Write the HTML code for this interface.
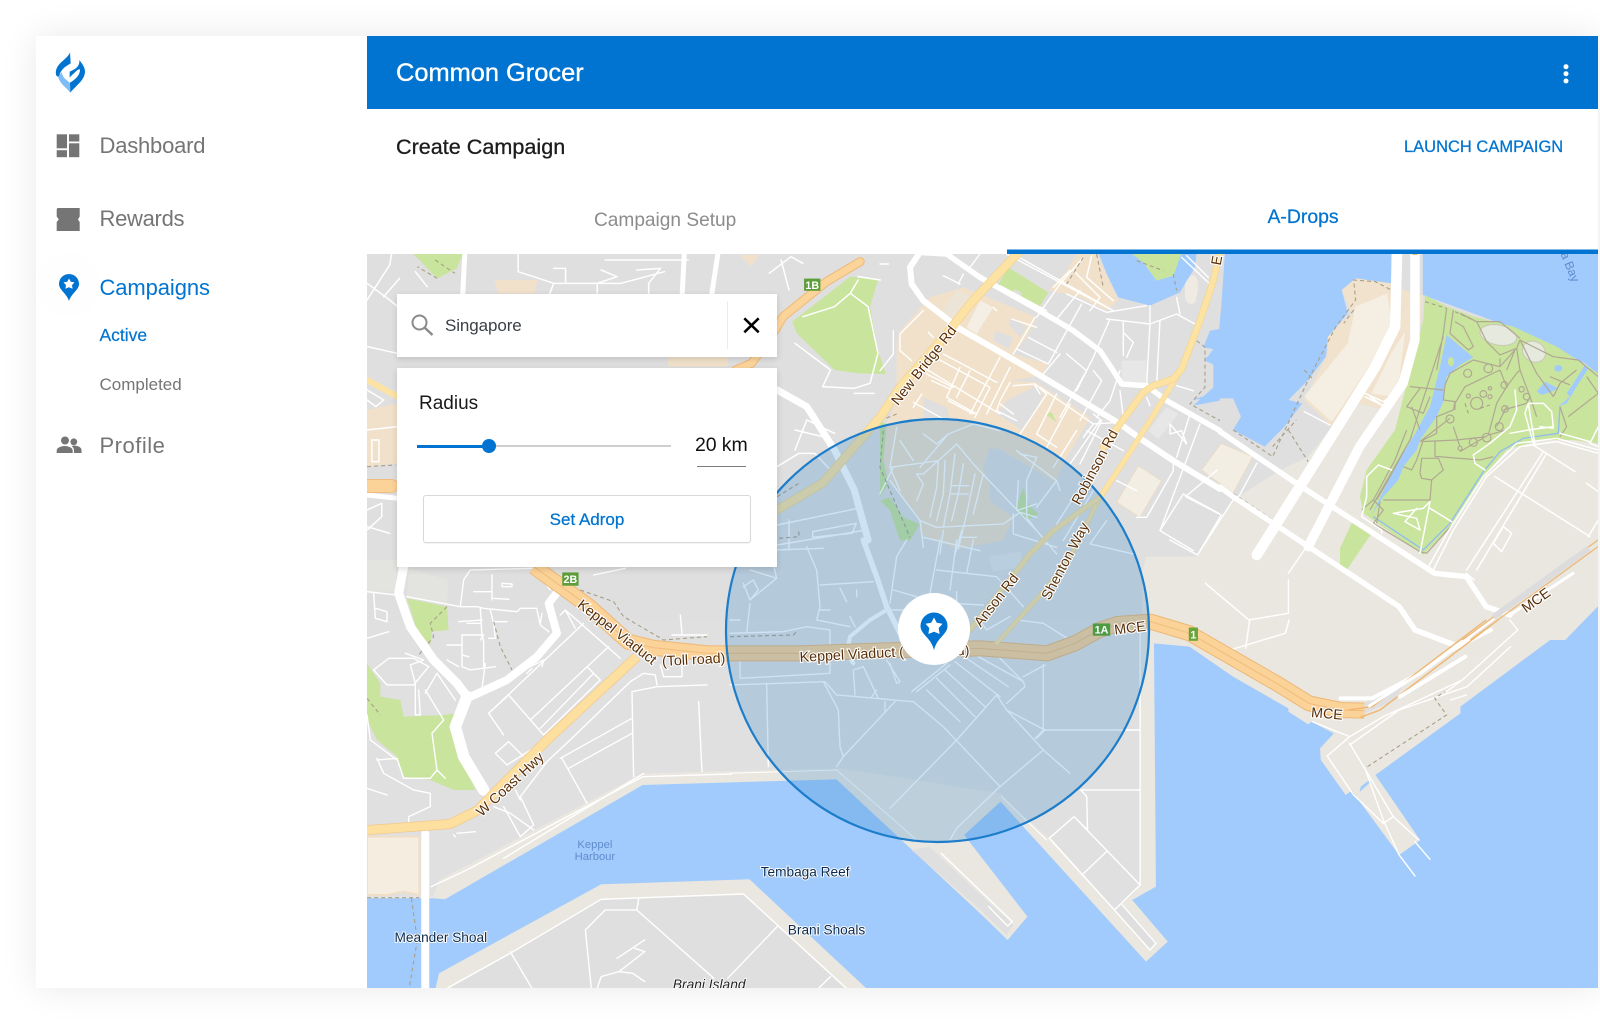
<!DOCTYPE html>
<html lang="en">
<head>
<meta charset="utf-8">
<title>Common Grocer - Create Campaign</title>
<style>
html,body{margin:0;padding:0;background:#fff;width:1600px;height:1025px;overflow:hidden;font-family:"Liberation Sans",sans-serif}
#card{position:absolute;left:36px;top:36px;width:1562px;height:952px;background:#fff;box-shadow:0 0 34px rgba(0,0,0,.09)}
svg#m{position:absolute;left:0;top:0}
svg#m *{vector-effect:non-scaling-stroke}
.t{position:absolute;white-space:nowrap;line-height:1}
.r{fill:none;stroke:#fff;stroke-linecap:round;stroke-linejoin:round}
.d{fill:none;stroke:#a89f88;stroke-width:1.1;stroke-dasharray:4 3}
.g{fill:none;stroke:#b0a893;stroke-width:1.2;stroke-linejoin:round}
.lb{font:14px "Liberation Sans",sans-serif;fill:#5a2f08;stroke:#fff;stroke-width:2.2;paint-order:stroke;text-anchor:middle}
.wl{font:13.4px "Liberation Sans",sans-serif;fill:#0d2a4a;stroke:#fff;stroke-width:1.8;paint-order:stroke;text-anchor:middle}
.sh{font:bold 10.5px "Liberation Sans",sans-serif;fill:#fff;text-anchor:middle}
.panel{position:absolute;background:#fff;box-shadow:0 2px 6px rgba(0,0,0,.14)}
</style>
</head>
<body>
<div id="card"></div>

<svg id="m" width="1600" height="1025" viewBox="0 0 1600 1025" xmlns="http://www.w3.org/2000/svg">
<defs>
<clipPath id="c"><rect x="367" y="254" width="1231" height="734"/></clipPath>
<path id="hwA" d="M440,-160L580,-40 678,65 740,83 880,100 1115,100 1358,90 1568,85 1738,100 1808,70 1870,30 1915,12 2000,5 2098,40 2208,115 2318,190 2400,250 2480,270 2540,272"/>
<path id="hwB" d="M0,632L228,612 296,572 473,360 700,110"/>
<path id="hwC" d="M420,-10L270,150 200,240 60,400 0,490 -172,687 -309,768"/>
<path id="hwD" d="M1265,35L1180,95 1070,200 1040,260 990,340 950,360"/>
<path id="hwE" d="M1020,-10L1000,80 960,200 905,345 880,375 820,395 790,415 720,510 670,580"/>
<path id="hwF" d="M905,345L880,385 810,500 740,610 660,730 520,830 450,900 270,1128"/>
<path id="hwG" d="M660,730L570,909 495,1008 351,1167"/>
</defs>
<g clip-path="url(#c)"><g style="filter:blur(.35px)">
<rect x="367" y="254" width="1231" height="734" fill="#a2cbfd"/>

<!-- ========== LAND FILLS ========== -->
<rect x="367" y="254" width="613" height="380" fill="#dfdfdf"/>
<g transform="translate(980,240) scale(.3954,.3333)">
<path fill="#dfdfdf" d="M0,30L620,30 610,200 600,330 570,355 590,375 590,460 535,480 575,475 640,475 660,530 640,570 720,620 770,560 815,490 780,480 830,420 875,350 880,290 930,220 915,150 950,115 1040,130 1040,30 1120,30 1120,165 1270,230 1400,290 1530,370 1570,410 1570,1090 1480,1200 0,1200Z"/>
<path fill="#e9e7df" d="M410,1000L420,950 550,950 640,780 760,690 830,650 890,560 950,490 1040,500 1100,400 1570,400 1570,1090 1480,1200 410,1200Z"/>
<path fill="#f0e2cc" d="M820,480L880,340 880,290 940,220 915,150 950,115 1040,130 1090,160 1120,165 1115,250 1095,330 1060,480 1030,510 950,490 890,560Z"/>
<path fill="#f5efe3" d="M820,470L930,310 950,200 1030,160 1040,250 1000,350 890,545ZM990,460L1040,340 1075,275 1060,420 1040,470Z"/>
<path fill="#f3eee4" stroke="#eadcc5" stroke-width="1" d="M560,690L610,610 690,650 640,760Z"/>
</g>
<!-- north-left fills -->
<g transform="translate(360,250) scale(.3954,.3333)">
<path fill="#c9e49d" d="M135,12L260,12 245,55 195,85ZM1093,215L1240,80 1310,90 1290,170 1310,300 1330,372 1260,370 1200,360 1105,250Z"/>
<path fill="#f1e1ca" d="M18,480L95,460 95,640 18,650ZM340,90L450,90 440,130 350,130ZM780,320L930,320 930,350 780,350ZM960,15L1010,15 990,50Z"/>
</g>
<!-- south fills -->
<g transform="translate(360,620) scale(.3954,.3333)">
<path fill="#e9e7df" d="M0,0L3078,0 2783,260 2783,280 2568,465 2681,660 2628,705 2508,512 2493,525 2430,420 2428,385 2463,340 2406,305 2398,313 2348,275 2348,265 2208,170 2098,80 2008,70 2013,800 1953,840 2043,965 1988,1025 1620,545 1528,645 1688,890 1638,960 1568,880 1205,478 715,495 215,838 185,835 0,835Z"/>
<path fill="#e0e0e0" d="M0,0L1973,0 1973,795 1953,825 1908,870 1748,660 1660,570 1620,520 1215,445 715,460 200,780 185,830 0,830Z"/>
<path fill="#dfdfdf" d="M1440,680L1652,915 1635,945 1560,860 1395,690Z"/>
<path fill="#dfdfdf" d="M1908,870L1928,855 2013,965 1998,990Z"/>
<path fill="#a2cbfd" d="M2543,500l14,-15 -6,-3 -20,18 -3,16Z"/>
<path fill="#f5eee0" stroke="#f0dfc6" stroke-width="2" d="M18,650L150,650 150,825 110,815 70,825 18,825Z"/>
<path fill="#e9e7df" d="M190,1110L200,1060 610,793 985,778 1285,1110Z"/>
<path fill="#dfdfdf" d="M220,1110L610,840 970,825 1230,1110Z"/>
<path fill="#dfdfdf" d="M2520,260L2590,220 2640,190 2620,240 2540,280Z"/>
</g>
<!-- A: central north fills -->
<g transform="translate(880,254) scale(.3333)">
<path fill="#a2cbfd" d="M655,-5L680,60 715,130 810,155 900,115 945,40 950,-5 905,-5 880,65 830,80 790,25 750,-5Z"/>
<path fill="#c9e49d" d="M750,-5L790,25 830,80 880,65 905,-5Z"/>
<path fill="#a2cbfd" d="M990,230L1020,225 1020,440 940,455 1000,400 1020,340 975,320 1000,285 970,280Z"/>
<path fill="#f0ebe2" d="M915,90Q935,50 950,70Q960,100 945,145Q925,160 915,130Z"/>
<path fill="#f1e1ca" d="M50,270L60,230 150,130 250,100 470,190 440,250 400,300 505,330 485,365 395,380 470,385 630,490 560,610 525,685 420,620 350,580 310,640 330,700 330,740 400,790 370,860 230,885 130,845 120,800 30,680 0,580 20,510 50,440Z"/>
<path fill="#f1e1ca" d="M505,110L560,50 590,0 650,0 680,60 715,140 680,170 600,130 560,120Z"/>
<path fill="#dfdfdf" d="M380,440L470,395 490,425 430,530 350,480ZM395,190L440,220 420,250 385,210ZM130,430L200,460 210,500 130,490ZM345,230L400,250 385,285 340,260ZM330,580L410,620 330,700 310,640Z"/>
<path fill="#c9e49d" d="M355,90L385,40 505,115 475,165 430,130 395,120Z"/>
<path fill="#dfdfdf" d="M400,105l25,10-5,20-22,-8Z"/>
<path fill="#c9e49d" d="M405,770L430,700 445,750 475,780 440,800ZM0,740L30,730 70,790 120,810 90,860 60,860 30,770ZM20,510L10,620 25,690 0,730 0,500ZM495,480l20,-5 15,30-20,-15Z"/>
<path fill="#ece4d6" d="M185,175L230,105 270,130 220,195Z"/>
<path fill="#f4eee4" d="M260,220L300,140 340,160 290,240Z"/>
<path fill="#f3eee4" stroke="#eadcc5" stroke-width="1" d="M710,745L775,635 845,680 780,790Z"/>
<path fill="#e7e7e7" d="M725,320L800,320 800,385 725,385ZM805,530L860,460 895,480 835,555Z"/>
</g>
<!-- B: garden fills -->
<g transform="translate(1340,270) scale(.3333)">
<path fill="#c9e49d" d="M255,75L320,110 400,140 520,170 650,230 775,310 775,520 700,510 600,510 500,540 430,620 340,760 250,855 70,730 60,680 80,600 165,480 250,150ZM0,835L42,745 95,790 20,900 0,900Z"/>
<path fill="#a2cbfd" d="M320,195L400,262 360,285 320,320 310,395 290,440 240,510 230,540 190,590 175,630 130,680 95,735 165,590 220,500 270,410 300,290ZM590,365L615,335 655,355 635,365 605,375ZM735,285L700,340 680,370 690,380 655,410 680,400 710,350 745,295ZM643,295a12,10 0 1,0 24,0a12,10 0 1,0 -24,0Z"/>
<ellipse cx="333" cy="275" rx="9" ry="14" fill="#c9e49d"/>
<ellipse cx="475" cy="195" rx="56" ry="30" transform="rotate(12 475 195)" fill="#e6e9dd" stroke="#c8c8b8"/>
<ellipse cx="582" cy="245" rx="36" ry="30" transform="rotate(30 582 245)" fill="#e6e9dd" stroke="#c8c8b8"/>
</g>
<!-- C: SW fills -->
<g transform="translate(367,560) scale(.3333)">
<path fill="#c9e49d" d="M120,115L240,140 245,210 195,215 190,255 150,210ZM0,310L40,370 40,410 100,420 110,470 230,465 265,460 265,520 290,600 325,690 260,690 190,660 110,650 90,590 30,540 0,480Z"/>
<path fill="#e6e6df" d="M0,0L90,0 85,95 0,95ZM125,25L245,60 240,130 120,110Z" opacity=".55"/>
</g>
<!-- D: building -->
<g transform="translate(730,540) scale(.3333)">
<path fill="#e6e6e6" d="M775,50L870,35 880,80 790,95Z"/>
</g>

<!-- ========== THIN ROADS ========== -->
<g transform="translate(360,250) scale(.3954,.3333)" class="r" stroke-width="1.5">
<path d="M18,150L75,45 80,12M18,100L75,150 95,170M140,65L170,110M100,85L60,140M400,12L400,65 490,100 660,100 770,65M490,55L520,55 520,100M610,60L650,80 600,100 600,130M700,60L760,55 730,100 730,130M620,30L830,30M490,100L480,130M1035,70L1090,20 1120,40M1065,30L1085,120"/>
<path d="M1100,280L1190,360 1170,410 1250,415 1290,400 1310,310 1285,170 1240,130 1200,170 1120,200M1240,130L1260,90M1260,80L1316,90M1055,650L1110,610 1150,610 1190,660M1100,540L1170,560M1100,600L1130,510 1200,550M1250,430L1300,430"/>
<path d="M18,290L94,310M18,420L60,450 40,470 18,450M18,540L94,530M30,570L48,570 48,635 30,635ZM18,780L55,760 55,800 18,840M18,830L75,850"/>
<path d="M1055,825L1260,775M1085,810L1085,900M1145,845L1255,820 1245,850 1145,862ZM1055,885L1280,840"/>
</g>
<g transform="translate(360,250) scale(.3954,.3333)">
<path class="d" d="M195,85L145,50M190,30L240,70M18,650L90,645M1055,740L1110,700M1060,865L1110,860 1110,840"/>
</g>

<!-- A thin -->
<g transform="translate(880,254) scale(.3333)" class="r" stroke-width="1.4">
<path d="M60,270L60,240 130,170M60,270L60,290 95,320M145,235L160,250M40,230L40,300 0,350M190,65L240,90M250,60L235,90M300,0L270,40M340,160L350,170M0,30L25,30"/>
<path d="M130,340L360,480M165,310L330,400M190,300L350,385M140,360L220,400M155,380L210,405M240,340L200,430 290,480M270,350L230,430M205,440L280,480M330,400L285,490M360,310L270,480M390,340L320,480M100,445L190,495M125,420L100,460M390,385L360,440 350,470 410,500M400,395L465,390 500,420M360,450L400,480M465,395L480,420M500,420L420,540M530,420L470,540 530,580M570,450L500,580M480,400L640,510 610,550M620,530L730,590M590,530L520,640M660,500L570,630M720,505L640,510M640,480L665,500 600,630"/>
<path d="M395,195L470,220M465,190L400,300M410,285L505,330M445,250L530,295M360,95L500,170M520,100L570,50M470,190L540,90 610,10M600,110L530,195M605,150L505,330M580,50L660,130 630,170M635,5L620,70 700,140M560,120L680,175 800,155M380,0L690,165M400,0L700,170"/>
<path d="M690,195L640,310 590,410M560,300L620,350 540,490M540,300L490,360M730,205L730,305M730,235L760,265 740,310M810,155L810,210 800,395M680,195L810,210 890,180 945,210M840,200L830,390M890,130L900,180M640,350L665,380 600,500M720,350L690,440 650,490M720,410L730,490M890,395L940,410M930,480L890,610M800,430L810,455M870,510L920,570 905,530 870,540 870,510M960,510L840,830 940,890M710,680L770,710M1020,780L910,720 840,830M710,660L740,600M880,620L880,650 800,790 770,790M905,10L990,90 1000,60M920,5L985,70"/>
<path d="M30,640L175,620M50,520L30,640 60,710M60,560L100,620M130,540L170,570 205,540 280,510 360,530M205,540L120,640M230,570L175,620 130,660 110,660 130,690 110,740M175,620L170,700 150,790M195,620L190,720 170,800M225,600L210,720 190,820M250,630L235,720 215,800M285,660L260,780 235,885M310,660L280,780M230,570L280,630 470,830 530,900M215,695L265,695M215,720L265,720M30,680L120,800 170,820 370,810 420,775 470,790M40,640L0,720M120,800L130,880M190,830L180,900M245,830L225,900M240,850L290,850M130,850L300,890M400,780L400,840 530,880M470,610L440,680 440,790 470,830M415,680L410,770 470,750M410,590L530,680 540,710M530,680L470,760M600,700L530,810M640,710L550,860M680,800L630,870 760,900M420,600L470,610"/>
</g>
<g transform="translate(880,254) scale(.3333)">
<path class="d" d="M0,500L50,480M10,530L0,640 60,780 90,850M610,10L560,90M650,0L670,100M880,60L890,110M770,20L850,50M950,260L975,280 975,400 930,450 1020,500"/>
</g>

<!-- NE thin -->
<g transform="translate(980,240) scale(.3954,.3333)" class="r" stroke-width="1.4">
<path d="M700,670L650,780M820,515L885,555M550,945L640,780M610,825L550,945 480,900M600,690L520,770 610,825"/>
<path d="M780,1000L820,930M780,1020L780,1120 680,1140 570,1030M1230,1000L1250,1020"/>
</g>
<g transform="translate(980,240) scale(.3954,.3333)">
<path class="d" d="M640,570L740,650 830,420 900,260 950,180 945,120 1000,125 1040,150M740,620L800,540M640,760L740,840M800,730L760,860M945,210L920,250M820,390L840,415M780,570L830,665"/>
</g>

<!-- B garden paths -->
<g transform="translate(1340,270) scale(.3333)">
<path d="M660,410L655,490 550,505 480,545 430,605 330,760 250,840 100,740" fill="none" stroke="#8fbdf0" stroke-width="1.3"/>
<path class="g" d="M320,115L310,190 290,300M340,120L330,190 385,240 400,230 370,170 345,155M360,130L410,155 440,215 480,255 530,235 540,210 640,260 715,270 775,320M410,155L480,155 540,205M480,265L480,290 400,270 330,310 315,345 310,390 345,395 340,420 290,440 290,490 250,510 230,570 215,600 190,590M245,565L295,565 310,600 275,630 245,625 240,610ZM275,630L270,690 130,690M120,695L110,760M245,515L350,510M285,515L285,560 295,560 420,570 460,560M330,445L240,515M345,420L345,400 375,350 480,300M480,300L500,350 470,400 445,495 360,545M340,470L360,530M350,510L440,500M480,290L525,240 500,300M530,235L540,300 570,380 560,400 490,420M540,210L590,310 640,380M640,380L660,340 710,300M500,350L530,310 540,300M445,495L500,480 510,470M470,470L500,410M570,380L590,440M630,320L690,345M685,440L775,370 740,320M660,410L680,470 660,500M210,350L310,360M240,355L200,410 250,430 270,380M215,410L240,480M200,480L165,570 100,690 65,720M215,500L150,620 110,690M310,200L210,510 90,720M100,690L130,720 100,760 240,845 260,850 340,760"/>
<g fill="none" stroke="#b0a893" stroke-width="1.2">
<circle cx="445" cy="295" r="13"/><circle cx="383" cy="310" r="12"/><circle cx="330" cy="447" r="12"/><circle cx="400" cy="517" r="12"/><circle cx="440" cy="503" r="13"/><circle cx="478" cy="470" r="12"/><circle cx="493" cy="345" r="10"/><circle cx="495" cy="417" r="10"/><circle cx="360" cy="535" r="6"/><circle cx="560" cy="380" r="10"/><circle cx="545" cy="358" r="8"/><circle cx="410" cy="400" r="18"/><circle cx="430" cy="372" r="10"/><circle cx="385" cy="378" r="6"/><circle cx="450" cy="380" r="6"/><circle cx="450" cy="355" r="5"/>
</g>
<path class="d" d="M255,95L320,115M345,125L400,150M420,415L450,405M375,400L385,430"/>
<g class="r" stroke-width="1.5">
<path d="M525,360L530,420 510,470 450,520 400,555 405,580 435,600M510,490L565,480 640,470 635,425 610,400 565,400 555,430 580,520M565,400L585,525M600,470L640,475M155,600L115,585 80,620 80,680 65,740 125,780 125,790M160,730L250,715 270,695 240,850M160,730L230,745 240,780 195,755 230,715M270,715L335,755"/>
<path d="M260,900L330,775 430,620 530,520 650,505 775,540M280,900L340,780 440,620 540,530 650,515 775,550M380,900L610,545M410,900L620,550M465,620L750,800M580,525L705,605M460,820L490,770 515,790 485,845ZM740,640L775,665M775,750L745,800M660,490L750,515M775,470L750,520 775,530"/>
<path d="M75,370L130,395 165,370M90,380L140,415M75,380L135,410"/>
</g>
</g>

<!-- C thin -->
<g transform="translate(367,560) scale(.3333)" class="r" stroke-width="1.4">
<path d="M0,95L90,105M120,110L280,140 330,140 350,145 450,155 460,145 510,145M280,140L290,60 310,30 500,25 550,90M375,45L375,120M405,70L435,72 435,80 405,80ZM320,95L375,95M380,115L425,118M340,145L345,230 350,240 350,320M370,150L380,190 385,235M275,185L345,180M300,190L340,190M380,185L420,185M285,225L350,225 340,240M285,225L285,320 310,330 385,320M240,255L285,255M285,285L305,290M240,300L275,320M355,310L345,385M365,235L385,235M510,150L520,195 545,215M525,160L520,190"/>
<path d="M20,100L25,175 60,185 60,155 25,145M0,235L65,215M65,295L140,295 185,320 140,375 60,375 20,330 65,295M115,280L170,300 130,315 145,370 145,465 160,465 155,390M175,400L210,340 265,420M175,390L230,480 195,520 210,630 235,655M210,630L190,655 110,655 90,595 30,600M0,465L10,540 90,600M30,595L50,640 140,690 190,700 190,740 125,770 125,790M0,685L60,705"/>
<path d="M425,405L365,460 410,525M425,405L530,525M595,150L760,295M650,190L365,460M725,260L490,480M660,320L700,360 530,525M680,340L520,505M425,545L385,580 420,615 570,520M425,545L470,590M595,150L625,205M580,165L595,150M490,320L530,300 525,320M480,340L495,325"/>
<path d="M795,395L800,650M795,395L870,380 1020,375M995,425L1005,635M795,475L580,595M795,520L605,625M585,595L660,730M870,375L865,345 830,340 790,365 620,530 540,605 460,710 500,795 460,830M460,720L445,690M410,740L460,830M380,740L430,760 500,810M880,315L890,350 945,350 945,320M270,820L325,815M260,825L265,830M830,640L410,895M940,165L945,220M915,225L1020,225M680,45L775,25"/>
</g>
<g transform="translate(367,560) scale(.3333)">
<path class="d" d="M240,140L190,190 200,230 155,285M380,185L400,260 435,330M640,90L740,125 770,170 890,240 1020,230M0,415L40,465"/>
</g>

<!-- D thin -->
<g transform="translate(730,540) scale(.3333)" class="r" stroke-width="1.4">
<path d="M230,20L260,90 270,200 260,240 360,260M270,135L430,125M330,145L350,185M380,150L380,170M270,210L300,210M360,230L375,260M60,190L50,280M0,240L30,240M40,130L60,180 140,115 125,50M40,140L70,120 85,150 60,180M60,90L140,115M0,40L130,30 280,25"/>
<path d="M0,280L160,275 230,260 300,270 300,400 30,415 30,365"/>
<path d="M500,50L480,190M530,0L500,50M630,0L600,160M680,0L660,150M730,0L710,100M620,90L800,110 880,200M490,150L560,170M480,210L520,210M680,155L680,190M660,190L760,195M840,230L770,270 750,240M860,240L940,250 1020,300"/>
<path d="M0,435L285,425 320,465 550,485 640,560 810,740M280,425L325,510 330,620 340,650M495,485L340,650 320,680M110,430L115,680M370,390L375,465M400,380L445,475M370,390L400,380M425,470L440,450M465,485L465,515M470,360L510,425 500,430 480,370"/>
<path d="M590,450L690,545M620,415L735,530M645,390L765,500M675,365L810,470M710,355L835,440M745,350L880,425M805,350L880,425 885,440 830,490M545,455L650,370M560,455L660,375"/>
<path d="M800,465L680,600 480,805M800,465L830,510 940,630 810,740 680,865 660,900M830,510L945,570M945,375L880,410M920,595L945,570M940,630L1020,700"/>
<path d="M0,700L320,690 560,900M815,770L950,900" stroke-width="1"/>
</g>
<g transform="translate(730,540) scale(.3333)">
<path class="d" d="M0,290L190,285 200,275"/>
</g>

<!-- S thin (remaining) -->
<g transform="translate(360,620) scale(.3954,.3333)" class="r" stroke-width="1.4">
<path d="M570,930L620,870 700,870 895,1075M570,930L585,1105M1055,920L930,1075M705,835L700,870M380,995L435,1105M650,1015L720,960M695,985L720,995 655,1055 610,1070 600,1105M655,1055L690,1060 720,1085M1190,1070L1160,1105M610,838L970,822 1230,1105M380,1000L610,838M220,1105L380,1000"/>
<path d="M715,470L940,462M270,750L715,470M180,800L270,750"/>
<path d="M1973,0L1973,795 1908,870 1748,660M1728,135L1728,330 1973,330M1728,330L1708,355M1823,510L1973,510M1823,510L1838,530 1840,630 1806,590 1973,795M1806,590L1743,655M1888,695L1826,765M1743,655L1908,870 1998,990 2013,970 1928,855"/>
<path d="M1470,700L1650,905 1638,918 1590,860"/>
<path d="M2408,305L2503,350 2446,408 2513,525M2503,350L2588,290 2788,180 2928,30 2908,0M2503,375L2628,270 2800,200 2910,80M2503,370L2613,590 2678,660M2543,450L2588,600 2628,705 2668,768M2668,665L2706,718M2513,525L2588,610 2613,590M2748,215L2793,175M2758,240L2798,225M2200,90L2340,40 2350,0M2240,85L2250,0"/>
</g>
<g transform="translate(360,620) scale(.3954,.3333)">
<path class="d" d="M18,833L150,833M130,835L145,960 125,1100M2548,440L2748,285 2718,235 2743,215"/>
</g>

<!-- ========== WIDE ROADS ========== -->
<g transform="translate(360,250) scale(.3954,.3333)" class="r">
<path stroke-width="5" d="M265,12L260,130M905,12L890,130M820,12L815,130"/>
<path stroke-width="7" d="M1055,420L1130,470 1200,600 1250,720 1285,870"/>
<path stroke-width="5" d="M18,735L95,745"/>
</g>
<g transform="translate(880,254) scale(.3333)" class="r">
<path stroke-width="6" d="M120,-5L90,40 95,90 130,140 240,225 440,340 720,510 790,560 880,620 1020,705"/>
<path stroke-width="5.500" d="M120,-5L200,0 300,70 470,165 580,230 660,290 700,350 725,390 800,395 860,440 1020,530"/>
</g>
<g transform="translate(980,240) scale(.3954,.3333)" class="r">
<path stroke-width="5.500" d="M607,575L800,730 1150,1000 1230,1010 1280,1100 1340,1125"/>
<path stroke-width="5.500" d="M607,741L640,770 1060,1100 1100,1170 1200,1215"/>
<path stroke-width="10.500" d="M1055,30L1050,260 1000,380 700,945"/>
<path stroke-width="9.500" d="M1100,30L1100,300 1070,430 960,620 830,920"/>
<path stroke-width="3" d="M1340,1125L1500,1000"/>
</g>
<g transform="translate(367,560) scale(.3333)" class="r">
<path stroke-width="9" d="M110,20L95,100 130,200 200,300 270,370 300,410"/>
<path stroke-width="11.500" d="M300,410L265,500 290,590 350,690"/>
<path stroke-width="8" d="M300,415L420,360 510,290 570,220 545,130 580,85"/>
</g>
<g transform="translate(730,540) scale(.3333)" class="r">
<path stroke-width="5.500" d="M400,0L440,110 470,200 510,280"/>
<path stroke-width="4" d="M470,210L420,240 360,290 350,340 370,370"/>
</g>
<g transform="translate(360,620) scale(.3954,.3333)" class="r">
<path stroke-width="8" d="M165,640L165,1105"/>
<path stroke-width="4" d="M2480,235L2560,235 2680,160 2760,90 2860,30"/>
</g>

<!-- ========== HIGHWAYS ========== -->
<g transform="translate(360,620) scale(.3954,.3333)" fill="none" stroke-linejoin="round">
<use href="#hwB" stroke="#f3c98c" stroke-width="10"/>
<use href="#hwB" stroke="#fddf9f" stroke-width="8.500"/>
<use href="#hwA" stroke="#eeb877" stroke-width="16"/>
<use href="#hwA" stroke="#fbd297" stroke-width="14"/>
<use href="#hwA" stroke="#f0bd7e" stroke-width="1"/>
<path d="M2530,292L2580,270 2878,0M2500,270L2560,260 2848,0" stroke="#f0b570" stroke-width="1.400"/>
<path d="M2550,260L2680,160 2868,-5" stroke="#fff" stroke-width="3"/>
<path d="M2630,230L2795,110" stroke="#fff" stroke-width="4" stroke-linecap="round"/>
</g>
<g transform="translate(880,254) scale(.3333)" fill="none" stroke-linejoin="round" stroke-linecap="round">
<use href="#hwC" stroke="#f3d38f" stroke-width="9"/>
<use href="#hwC" stroke="#fde3a3" stroke-width="7.500"/>
<use href="#hwG" stroke="#f4d58f" stroke-width="4.500"/>
<use href="#hwG" stroke="#fde3a3" stroke-width="3.500"/>
<use href="#hwF" stroke="#f4d58f" stroke-width="5.500"/>
<use href="#hwF" stroke="#fde3a3" stroke-width="4.500"/>
<use href="#hwE" stroke="#f4d58f" stroke-width="7"/>
<use href="#hwE" stroke="#fde3a3" stroke-width="5.500"/>
</g>
<g transform="translate(360,250) scale(.3954,.3333)" fill="none" stroke-linejoin="round" stroke-linecap="round">
<use href="#hwD" stroke="#f0b878" stroke-width="9"/>
<use href="#hwD" stroke="#fbd49a" stroke-width="7"/>
<path d="M18,390L95,440" stroke="#fde3a3" stroke-width="6"/>
<path d="M18,708L80,708" stroke="#f0bd7e" stroke-width="14"/>
<path d="M18,708L80,708" stroke="#fbd297" stroke-width="12"/>
</g>
<g transform="translate(980,240) scale(.3954,.3333)" fill="none">
<path d="M1100,30v15" stroke="#eeb877" stroke-width="5"/>
<path d="M1563,900L1220,1200M1563,920L1240,1200" stroke="#eeb877" stroke-width="1.300"/>
<path d="M1540,925L1300,1130" stroke="#dcdcdc" stroke-width="6"/>
</g>

<!-- radius circle -->
<circle cx="937.500" cy="630.500" r="211.500" fill="rgba(40,130,205,.23)" stroke="#1c7dcb" stroke-width="2.200"/>

<!-- labels -->
<g transform="scale(1.0204)">
<text class="lb" transform="translate(909,361) rotate(-52)">New Bridge Rd</text>
<text class="lb" transform="translate(1077,460) rotate(-62)">Robinson Rd</text>
<text class="lb" transform="translate(1048,552) rotate(-62)">Shenton Way</text>
<text class="lb" transform="translate(980,591) rotate(-52)">Anson Rd</text>
<text class="lb" transform="translate(602,623) rotate(38)">Keppel Viaduct</text>
<text class="lb" transform="translate(680,651) rotate(-3)">(Toll road)</text>
<text class="lb" transform="translate(835,646) rotate(-3)">Keppel Viaduct (</text>
<text class="lb" transform="translate(944,642) rotate(-3)">d)</text>
<text class="lb" transform="translate(503,772) rotate(-43)">W Coast Hwy</text>
<text class="lb" transform="translate(1108,620) rotate(-7)">MCE</text>
<text class="lb" transform="translate(1300,704) rotate(5)">MCE</text>
<text class="lb" transform="translate(1508,592) rotate(-36)">MCE</text>
<text class="lb" transform="translate(1197,256) rotate(-80)">E</text>
<rect x="788" y="273" width="16" height="12" fill="#5e9e3a"/><text class="sh" x="796" y="283">1B</text>
<rect x="551" y="561" width="16" height="13" fill="#5e9e3a"/><text class="sh" x="559" y="571.500">2B</text>
<rect x="1071" y="611" width="17" height="12" fill="#4f9a45"/><text class="sh" x="1079.500" y="621">1A</text>
<rect x="1165" y="615" width="9" height="13" fill="#6aa53c"/><text class="sh" x="1169.500" y="625.500">1</text>
<text x="583" y="831" font-size="11" fill="#5f8ccd" text-anchor="middle">Keppel</text>
<text x="583" y="843" font-size="11" fill="#5f8ccd" text-anchor="middle">Harbour</text>
<text class="wl" x="789" y="859">Tembaga Reef</text>
<text class="wl" x="810" y="916">Brani Shoals</text>
<text class="wl" x="432" y="923">Meander Shoal</text>
<text x="695" y="969" font-size="13.500" font-style="italic" fill="#222" stroke="#fff" stroke-width="1.600" paint-order="stroke" text-anchor="middle">Brani Island</text>
<text transform="translate(1535,263) rotate(68)" font-size="12" fill="#5f8ccd" text-anchor="middle">a Bay</text>
</g>

<!-- pin -->
<circle cx="934" cy="629" r="36" fill="#fff"/>
<path fill="#0074d0" d="M934,612.500a13.500,13.500 0 0 1 13.500,13.500c0,8.500 -10.500,11.500 -13.500,24c-3,-12.500 -13.500,-15.500 -13.500,-24a13.500,13.500 0 0 1 13.500,-13.500z"/>
<path fill="#fff" d="M934,617.500l2.800,5.300 5.700,.9 -3.800,4.300 .9,6 -5.600,-2.300 -5.600,2.300 .9,-6 -3.800,-4.300 5.700,-.9z"/>
</g></g>

<!-- tab underline -->
<rect x="1007" y="249.500" width="591" height="4.500" fill="#0074d0"/>
<!-- header -->
<rect x="367" y="36" width="1231" height="73" fill="#0074d0"/>
<circle cx="1566" cy="66.700" r="2.500" fill="#fff"/><circle cx="1566" cy="73.700" r="2.500" fill="#fff"/><circle cx="1566" cy="81" r="2.500" fill="#fff"/>

<!-- logo -->
<g transform="translate(30,30) scale(.3333)">
<path fill="#7dbcf5" d="M84,140C90,133 93,130 96,126C96,146 114,150 120,160L121,188C108,172 90,162 84,140Z"/>
<path fill="#0074d0" d="M120,67L122,100C105,110 93,118 88,136C84,142 80,140 78,134C73,100 112,90 120,67Z"/>
<path fill="#0074d0" d="M148,90C155,100 165,110 165,125C165,150 135,170 121,188L120,158C135,150 150,135 150,120C147,112 135,128 119,142L119,125C135,118 150,110 148,90Z"/>
</g>

<!-- sidebar icons -->
<g fill="#757575">
<rect x="56.700" y="134.300" width="10.300" height="14"/><rect x="56.700" y="150.200" width="10.300" height="7"/><rect x="69" y="134.300" width="10.300" height="7.200"/><rect x="69" y="143.300" width="10.300" height="13.900"/>
<path d="M57.500,208H79.700V216.500L78,219.500 79.700,222V231H56.700V222L58.800,219.500 56.700,216.500V209Z"/>
<circle cx="65" cy="440.500" r="4"/><circle cx="73.800" cy="441.800" r="3.400"/>
<path d="M56.700,453V450.500C56.700,447.500 61.700,446 64.700,446S72.700,447.500 72.700,450.500V453ZM74,453V450.500C74,448.500 73,447 71.500,446C72.500,445.700 73.500,445.600 74.500,445.600C77.500,445.600 81.500,447.100 81.500,450V453Z"/>
</g>
<circle cx="69" cy="285" r="32" fill="#fefefe"/>
<path fill="#0074d0" d="M69,274a10,10 0 0 1 10,10c0,6 -7.500,9 -10,17c-2.500,-8 -10,-11 -10,-17a10,10 0 0 1 10,-10z"/>
<path fill="#fff" d="M69,278.500l1.800,3.300 3.700,.6 -2.500,2.700 .6,3.700 -3.600,-1.500 -3.600,1.500 .6,-3.700 -2.500,-2.700 3.700,-.6z"/>
</svg>

<!-- sidebar text -->
<div class="t" style="left:99.500px;top:135px;font-size:22px;letter-spacing:-.2px;color:#757575">Dashboard</div>
<div class="t" style="left:99.500px;top:208px;font-size:22px;letter-spacing:-.3px;color:#757575">Rewards</div>
<div class="t" style="left:99.500px;top:277px;font-size:22px;letter-spacing:-.1px;color:#0074d0">Campaigns</div>
<div class="t" style="left:99.500px;top:327px;font-size:17.500px;color:#0074d0;-webkit-text-stroke:.2px #0074d0">Active</div>
<div class="t" style="left:99.500px;top:376px;font-size:17px;color:#757575">Completed</div>
<div class="t" style="left:99.500px;top:435px;font-size:22px;letter-spacing:.5px;color:#757575">Profile</div>

<!-- header text -->
<div class="t" style="left:396px;top:61px;font-size:25.400px;color:#fff;-webkit-text-stroke:.35px #fff">Common Grocer</div>
<div class="t" style="left:396px;top:135.500px;font-size:21.600px;color:#1c1c1c;-webkit-text-stroke:.3px #1c1c1c">Create Campaign</div>
<div class="t" style="left:1404px;top:139px;font-size:16.500px;color:#0074d0;-webkit-text-stroke:.25px #0074d0">LAUNCH CAMPAIGN</div>
<div class="t" style="left:594px;top:211px;font-size:19.100px;color:#8c8c8c">Campaign Setup</div>
<div class="t" style="left:1267.500px;top:207.500px;font-size:19.400px;color:#0074d0;-webkit-text-stroke:.25px #0074d0">A-Drops</div>

<!-- search panel -->
<div class="panel" style="left:397px;top:294px;width:380px;height:63px">
<div style="position:absolute;left:329.500px;top:7px;width:1px;height:48px;background:#ececec"></div>
</div>
<svg style="position:absolute;left:0;top:0" width="1600" height="1025" viewBox="0 0 1600 1025">
<circle cx="419.500" cy="322.500" r="7" fill="none" stroke="#8a8a8a" stroke-width="2"/>
<path d="M424.500,327.500L432.500,335" stroke="#8a8a8a" stroke-width="2.400" fill="none"/>
<path d="M744.300,318.300L758.700,332.300M758.700,318.300L744.300,332.300" stroke="#000" stroke-width="2.500" fill="none"/>
</svg>
<div class="t" style="left:445px;top:317px;font-size:17px;color:#3a3f47;letter-spacing:-.1px">Singapore</div>

<!-- radius panel -->
<div class="panel" style="left:397px;top:368px;width:380px;height:199px"></div>
<div class="t" style="left:419px;top:394px;font-size:19px;color:#1a1a1a">Radius</div>
<div style="position:absolute;left:416.500px;top:445px;width:254px;height:2px;background:#cfcfcf"></div>
<div style="position:absolute;left:416.500px;top:445px;width:72px;height:2.500px;background:#0074d0"></div>
<div style="position:absolute;left:481.500px;top:439px;width:14px;height:14px;border-radius:50%;background:#0074d0"></div>
<div class="t" style="left:695px;top:435.500px;font-size:19.500px;letter-spacing:-.1px;color:#111">20 km</div>
<div style="position:absolute;left:697px;top:466px;width:49px;height:1px;background:#7d7d7d"></div>
<div style="position:absolute;left:423px;top:495px;width:326px;height:46px;border:1px solid #d9d9d9;border-radius:3px;box-shadow:0 1px 1px rgba(0,0,0,.05);background:#fff"></div>
<div class="t" style="left:423px;top:510.500px;width:328px;text-align:center;font-size:17px;color:#0074d0;-webkit-text-stroke:.25px #0074d0">Set Adrop</div>
</body>
</html>
